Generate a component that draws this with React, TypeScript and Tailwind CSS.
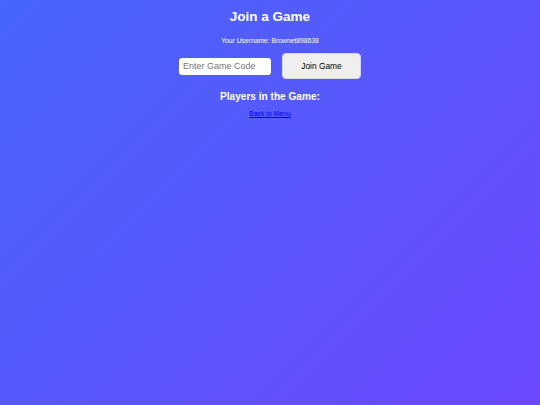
export default function App() {
  return (
    <div
      className="min-h-[405px] w-full bg-[linear-gradient(135deg,#4766fb,#6c48fd)] text-white"
      style={{ fontFamily: '"Liberation Sans", Arial, sans-serif' }}
    >
      <div className="flex flex-col items-center pt-[9px]">
        <h1 className="text-[13.5px] font-bold leading-[16px]">Join a Game</h1>
        <p className="mt-[12px] text-[6.75px] leading-[8px]">Your Username: Brownet898638</p>
        <div className="mt-[8px] flex items-center gap-[11px] text-[9px]">
          <input
            type="text"
            placeholder="Enter Game Code"
            className="h-[17px] w-[92px] rounded-[3px] bg-white px-[4px] leading-[10px] text-black outline-none placeholder:text-[#757575]"
          />
          <button className="h-[26px] w-[79px] rounded-[4px] border border-[#d8d8e8] bg-[#efefef] text-[8.4px] text-black">
            Join Game
          </button>
        </div>
        <h2 className="mt-[12px] text-[10.1px] font-bold leading-[12px]">Players in the Game:</h2>
        <a href="#" className="mt-[7px] text-[6.75px] leading-[8px] text-[#0000ee] underline">
          Back to Menu
        </a>
      </div>
    </div>
  );
}
